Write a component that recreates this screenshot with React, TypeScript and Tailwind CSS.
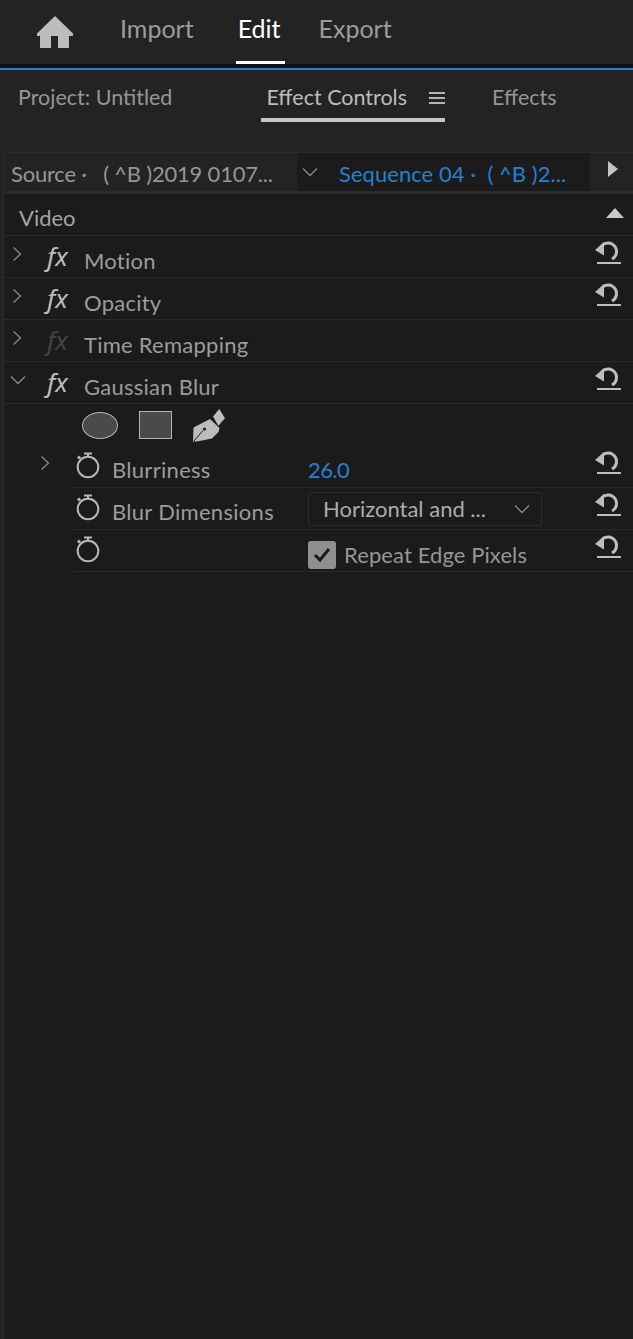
import React from "react";

const Chevron = ({ down = false }: { down?: boolean }) => (
  <svg width="16" height="16" viewBox="0 0 16 16" fill="none" stroke="#8a8a8a" strokeWidth="1.3">
    {down ? <path d="M1 4.500l7 7 7-7" /> : <path d="M3.500 1.500l7 6.500-7 6.500" />}
  </svg>
);

const Reset = () => (
  <svg width="27" height="26" viewBox="0 0 27 26" fill="none" className="shrink-0">
    <path d="M7 6.500A8.500 8.500 0 1 1 17 20" stroke="#bdbdbd" strokeWidth="3" />
    <path d="M0 11L9 3v13.500z" fill="#bdbdbd" />
    <path d="M2 24h24" stroke="#bdbdbd" strokeWidth="2" />
  </svg>
);

const Watch = () => (
  <svg width="26" height="28" viewBox="0 0 26 28" fill="none" className="shrink-0">
    <circle cx="13" cy="16" r="10.300" stroke="#b8b8b8" strokeWidth="2" />
    <path d="M9 2.500h8M13 2.500v3.500" stroke="#b8b8b8" strokeWidth="2" />
    <rect x="2.500" y="5" width="3" height="3" fill="#b8b8b8" transform="rotate(45 4 6.500)" />
  </svg>
);

const Fx = ({ dim = false }: { dim?: boolean }) => (
  <span className={`block w-[24px] font-['Noto_Sans'] italic text-[26px] leading-none ${dim ? "text-[#444444]" : "text-[#bdbdbd]"}`}>fx</span>
);

const Row = ({ children, inset = "" }: { children: React.ReactNode; inset?: string }) => (
  <div className={`flex h-[42px] items-center border-b border-[#2a2a2a] ${inset}`}>{children}</div>
);

const EffectRow = ({ name, open = false, dim = false, reset = true }: { name: string; open?: boolean; dim?: boolean; reset?: boolean }) => (
  <Row>
    <span className="ml-[6px] flex w-[37px] -translate-y-[3px]"><Chevron down={open} /></span>
    <span className="-translate-y-[1px]"><Fx dim={dim} /></span>
    <span className="ml-[13px] translate-y-[4px] text-[#9c9c9c] tracking-[0.25px]">{name}</span>
    {reset && <span className="ml-auto mr-[11px] -translate-y-[5px]"><Reset /></span>}
  </Row>
);

const PropRow = ({ name, chevron = false, children }: { name?: string; chevron?: boolean; children?: React.ReactNode }) => (
  <div className="flex items-stretch">
    <span className="flex w-[69px] items-center pb-[8px] pl-[34px]">{chevron && <Chevron />}</span>
    <div className="flex h-[42px] flex-1 items-center border-b border-[#2a2a2a] pl-[2px]">
      <span className="-translate-y-[2px]"><Watch /></span>
      <span className="ml-[11px] w-[196px] shrink-0 translate-y-[3px] text-[#9c9c9c] tracking-[0.3px]">{name}</span>
      {children}
      <span className="ml-auto mr-[11px] -translate-y-[5px]"><Reset /></span>
    </div>
  </div>
);

export default function App() {
  return (
    <div className="flex h-[1339px] w-[633px] flex-col overflow-hidden bg-[#232323] font-['Lato',sans-serif] text-[22px] leading-none">
      <header className="flex h-[64px] items-center text-[25px]">
        <svg width="38" height="32" viewBox="0 0 38 32" className="ml-[36px] fill-[#bcbcbc]">
          <path d="M19 0L37 17.500V20h-4v12H22V20h-7v12H4V20H1v-2.500z" />
        </svg>
        <span className="ml-[46px] -translate-y-[4px] text-[#9c9c9c]">Import</span>
        <span className="relative ml-[44px] -translate-y-[4px] text-white">
          Edit
          <span className="absolute -bottom-[23px] -left-[2px] h-[3px] w-[49px] bg-white" />
        </span>
        <span className="ml-[38px] -translate-y-[4px] text-[#9c9c9c]">Export</span>
      </header>
      <div className="h-[4px] bg-[#111111]" />
      <div className="h-[2px] bg-[#2680d0]" />
      <nav className="flex h-[82px] items-start pt-[17px] text-[21.500px] text-[#969696]">
        <span className="ml-[18px]">Project: Untitled</span>
        <span className="relative ml-[94px] flex items-center text-[#bcbcbc]">
          Effect Controls
          <svg width="16" height="14" viewBox="0 0 16 14" className="ml-[22px]" stroke="#b4b4b4" strokeWidth="2"><path d="M0 2h16M0 7h16M0 12h16" /></svg>
          <span className="absolute -bottom-[13px] -left-[5px] right-0 h-[4px] bg-[#c4c4c4]" />
        </span>
        <span className="ml-[47px]">Effects</span>
      </nav>
      <div className="ml-[3px] flex min-h-0 flex-1 flex-col border-l border-[#2e2e2e]">
        <div className="flex h-[42px] border-y border-[#2c2c2c] border-b-[3px]">
          <div className="flex w-[293px] translate-y-[2px] items-center pl-[7px] text-[#969696] tracking-[-0.2px]">Source&nbsp;·&nbsp;&nbsp;&nbsp;( ^B )2019 0107...</div>
          <div className="flex w-[293px] items-center bg-[#1b1b1b] pl-[5px]">
            <Chevron down />
            <span className="ml-[21px] translate-y-[2px] text-[#2680d0] tracking-[0.05px]">Sequence 04&nbsp;·&nbsp;&nbsp;( ^B )2...</span>
          </div>
          <div className="flex flex-1 items-center pl-[18px]">
            <svg width="10" height="16" viewBox="0 0 10 16" className="-translate-y-[3px] fill-[#c4c4c4]"><path d="M0 0l10 8-10 8z" /></svg>
          </div>
        </div>
        <div className="flex-1 bg-[#1b1b1b]">
          <Row>
            <span className="ml-[15px] translate-y-[3px] text-[#a4a4a4]">Video</span>
            <svg width="18" height="10" viewBox="0 0 18 10" className="ml-auto mr-[9px] -translate-y-[2px] fill-[#c8c8c8]"><path d="M9 0l9 10H0z" /></svg>
          </Row>
          <EffectRow name="Motion" />
          <EffectRow name="Opacity" />
          <EffectRow name="Time Remapping" dim reset={false} />
          <EffectRow name="Gaussian Blur" open />
          <div className="flex h-[42px] items-center pl-[78px]">
            <span className="h-[27px] w-[36px] rounded-[50%] border-[1.500px] border-[#b4b4b4] bg-[#4a4a4a]" />
            <span className="ml-[21px] h-[28px] w-[33px] border-[1.500px] border-[#b4b4b4] bg-[#4a4a4a]" />
            <svg width="34" height="34" viewBox="0 0 34 34" className="ml-[20px]">
              <path d="M21 8.500L27.300 1 33 10.300 26.300 17.700z" fill="#bcbcbc" />
              <path d="M18 11l9.500 9-1 4-6.500 6.500L5 33.500H1L1.500 19.500z" fill="#bcbcbc" />
              <path d="M2 33L11 22.500" stroke="#1b1b1b" strokeWidth="1" />
              <circle cx="12.500" cy="21" r="1.600" fill="#1b1b1b" />
            </svg>
          </div>
          <PropRow name="Blurriness" chevron>
            <span className="translate-y-[3px] text-[#2680d0] tracking-[-0.6px]">26.0</span>
          </PropRow>
          <PropRow name="Blur Dimensions">
            <div className="flex h-[34px] w-[234px] items-center rounded-[3px] border border-[#2c2c2c] pl-[14px] pr-[11px] text-[#acacac]">
              Horizontal and ...
              <span className="ml-auto"><Chevron down /></span>
            </div>
          </PropRow>
          <PropRow>
            <div className="flex translate-y-[4px] items-center">
              <span className="flex h-[28px] w-[28px] items-center justify-center rounded-[3px] bg-[#8f8f8f]">
                <svg width="20" height="18" viewBox="0 0 20 18" fill="none" stroke="#1b1b1b" strokeWidth="3"><path d="M3 9l5 5 9-11" /></svg>
              </span>
              <span className="ml-[8px] whitespace-nowrap text-[#969696] tracking-[0.1px]">Repeat Edge Pixels</span>
            </div>
          </PropRow>
        </div>
      </div>
    </div>
  );
}
